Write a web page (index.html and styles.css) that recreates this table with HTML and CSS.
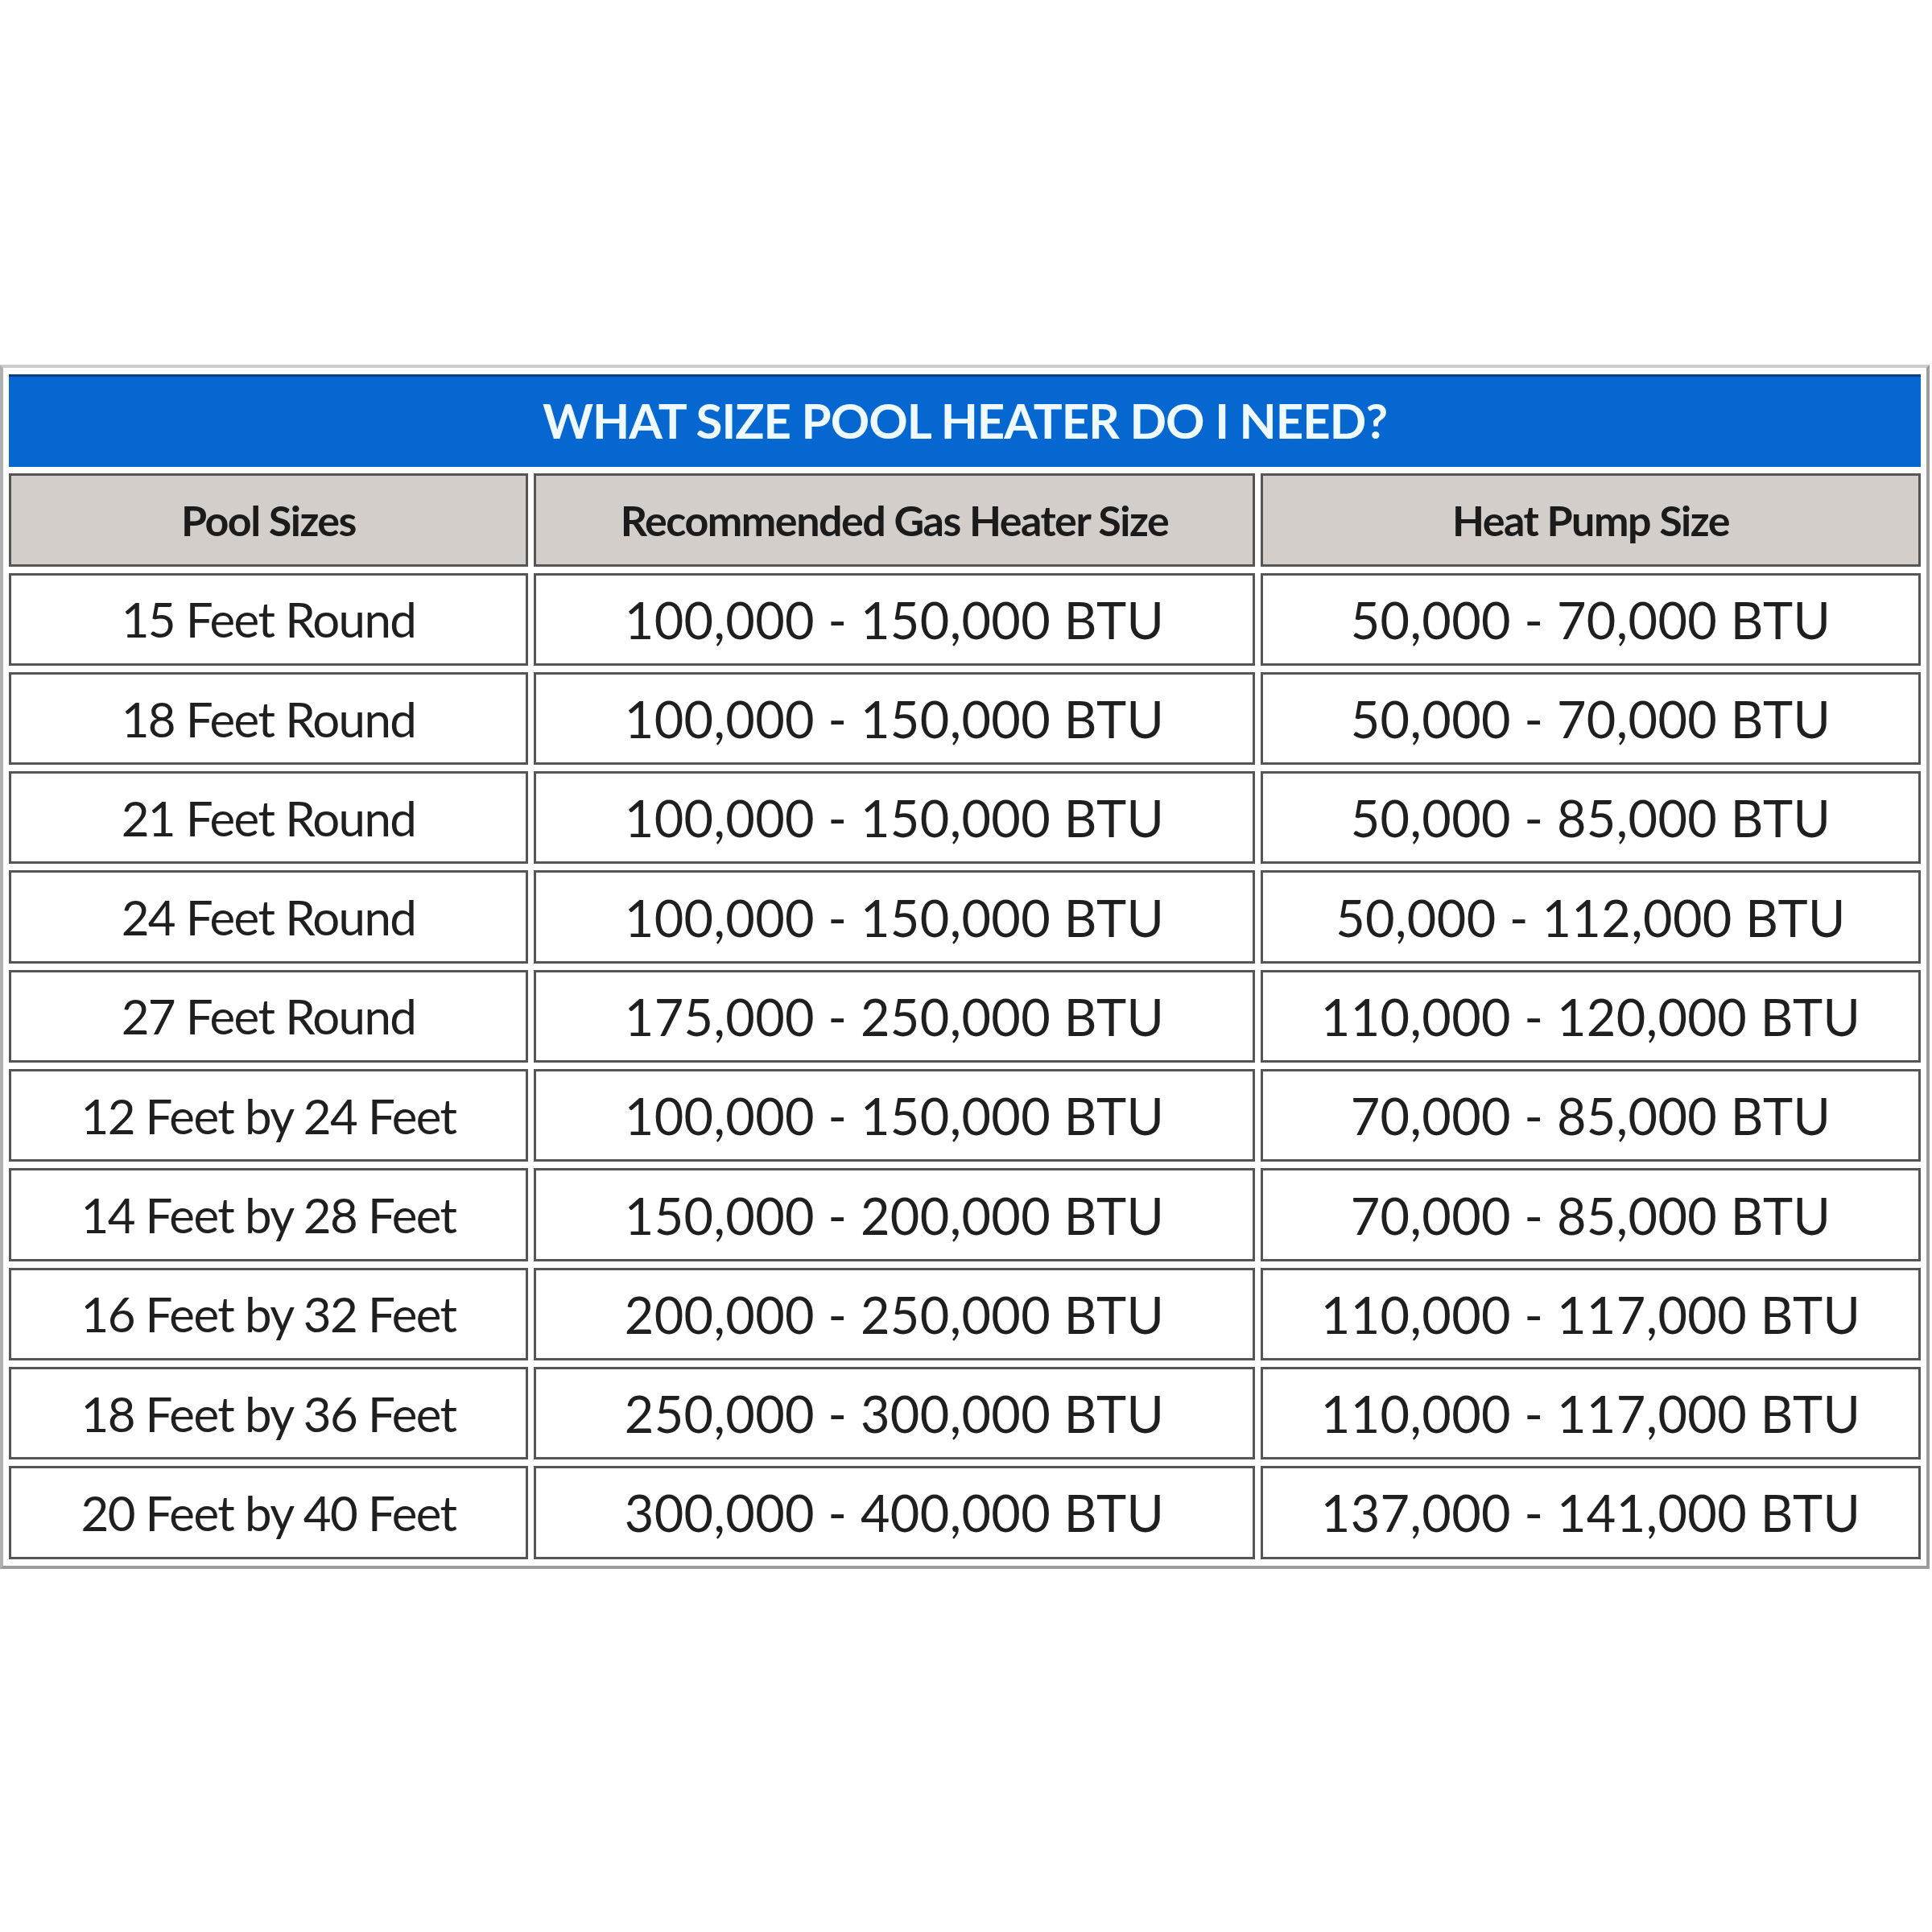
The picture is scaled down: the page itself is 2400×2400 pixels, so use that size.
FILE: index.html
```html
<!DOCTYPE html>
<html lang="en">
<head>
<meta charset="utf-8">
<title>What Size Pool Heater Do I Need?</title>
<link rel="stylesheet" href="styles.css">
</head>
<body>
<main class="page">
  <div class="chart">
    <div class="title">WHAT SIZE POOL HEATER DO I NEED?</div>
    <div class="cell head">Pool Sizes</div>
    <div class="cell head">Recommended Gas Heater Size</div>
    <div class="cell head">Heat Pump Size</div>

    <div class="cell size">15 Feet Round</div>
    <div class="cell btu">100,000 - 150,000 BTU</div>
    <div class="cell btu">50,000 - 70,000 BTU</div>

    <div class="cell size">18 Feet Round</div>
    <div class="cell btu">100,000 - 150,000 BTU</div>
    <div class="cell btu">50,000 - 70,000 BTU</div>

    <div class="cell size">21 Feet Round</div>
    <div class="cell btu">100,000 - 150,000 BTU</div>
    <div class="cell btu">50,000 - 85,000 BTU</div>

    <div class="cell size">24 Feet Round</div>
    <div class="cell btu">100,000 - 150,000 BTU</div>
    <div class="cell btu">50,000 - 112,000 BTU</div>

    <div class="cell size">27 Feet Round</div>
    <div class="cell btu">175,000 - 250,000 BTU</div>
    <div class="cell btu">110,000 - 120,000 BTU</div>

    <div class="cell size">12 Feet by 24 Feet</div>
    <div class="cell btu">100,000 - 150,000 BTU</div>
    <div class="cell btu">70,000 - 85,000 BTU</div>

    <div class="cell size">14 Feet by 28 Feet</div>
    <div class="cell btu">150,000 - 200,000 BTU</div>
    <div class="cell btu">70,000 - 85,000 BTU</div>

    <div class="cell size">16 Feet by 32 Feet</div>
    <div class="cell btu">200,000 - 250,000 BTU</div>
    <div class="cell btu">110,000 - 117,000 BTU</div>

    <div class="cell size">18 Feet by 36 Feet</div>
    <div class="cell btu">250,000 - 300,000 BTU</div>
    <div class="cell btu">110,000 - 117,000 BTU</div>

    <div class="cell size">20 Feet by 40 Feet</div>
    <div class="cell btu">300,000 - 400,000 BTU</div>
    <div class="cell btu">137,000 - 141,000 BTU</div>
  </div>
</main>
</body>
</html>
```

FILE: styles.css
```css
html, body {
  margin: 0;
  padding: 0;
  background: #ffffff;
}

.page {
  padding-top: 453px;
}

.chart {
  box-sizing: border-box;
  width: 2397px;
  display: grid;
  grid-template-columns: 645px 896px 820px;
  grid-auto-rows: 115.3px;
  gap: 8px 7px;
  padding: 8px 7px;
  border: 4px solid #9c9c9c;
  border-top-color: #cdcdcd;
  border-left-color: #b0b0b0;
  box-shadow: 0 3px 0 #d6d6d6;
  font-family: "Lato", "Liberation Sans", sans-serif;
  color: #1f1f1f;
}

.title {
  grid-column: 1 / 4;
  display: flex;
  align-items: center;
  justify-content: center;
  padding-bottom: 4px;
  background: #0767d0;
  border-top: 3px solid #0a3f86;
  color: #eefaff;
  font-weight: 700;
  font-size: 60px;
  letter-spacing: -1px;
}

.cell {
  box-sizing: border-box;
  display: flex;
  align-items: center;
  justify-content: center;
  border: 3px solid #555555;
  background: #ffffff;
  white-space: nowrap;
}

.head {
  background: #d3cec9;
  font-weight: 700;
  font-size: 52px;
  letter-spacing: -1.5px;
  color: #1b1b1b;
}

.size {
  font-size: 60px;
  letter-spacing: -1.6px;
}

.btu {
  font-size: 63px;
  letter-spacing: 0.4px;
}
```
